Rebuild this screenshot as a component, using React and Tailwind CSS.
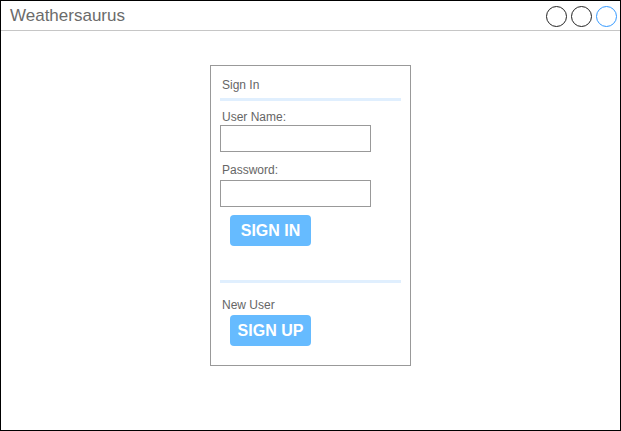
import React from 'react';

const App = () => {
  return (
    <div
      className="w-[621px] h-[431px] border border-black bg-white box-border flex flex-col font-['Liberation_Sans',Arial,sans-serif]"
    >
      {/* Window title bar */}
      <div className="h-[30px] shrink-0 border-b border-[#c6c6c6] box-border flex items-start justify-between pl-[9px] pr-[3px]">
        <div className="mt-[5px] text-[17px] leading-[19px] text-[#6b6b6b]">Weathersaurus</div>
        <div className="flex gap-[4px] mt-[5px]">
          <div className="w-[21px] h-[21px] rounded-full border border-[#222]" />
          <div className="w-[21px] h-[21px] rounded-full border border-[#222]" />
          <div className="w-[21px] h-[21px] rounded-full border border-[#3399ff]" />
        </div>
      </div>

      {/* Sign in card */}
      <div className="ml-[209px] mt-[34px] w-[201px] h-[301px] border border-[#999] box-border flex flex-col items-start">
        <div className="mt-[12px] ml-[11px] text-[12px] leading-[14px] text-[#666]">Sign In</div>
        <div className="mt-[6px] ml-[9px] w-[181px] h-[3px] bg-[#e0effe]" />

        <div className="mt-[9px] ml-[11px] text-[12px] leading-[14px] text-[#666]">User Name:</div>
        <input
          type="text"
          className="mt-[1px] ml-[9px] w-[151px] h-[27px] border border-[#999] box-border outline-none"
        />

        <div className="mt-[11px] ml-[11px] text-[12px] leading-[14px] text-[#666]">Password:</div>
        <input
          type="password"
          className="mt-[3px] ml-[9px] w-[151px] h-[27px] border border-[#999] box-border outline-none"
        />

        <button className="mt-[8px] ml-[19px] w-[81px] h-[31px] rounded-[4px] bg-[#66bbff] text-white font-bold text-[16px] leading-[18px] flex items-center justify-center">
          SIGN IN
        </button>

        <div className="mt-[34px] ml-[9px] w-[181px] h-[3px] bg-[#e0effe]" />

        <div className="mt-[15px] ml-[11px] text-[12px] leading-[14px] text-[#666]">New User</div>
        <button className="mt-[3px] ml-[19px] w-[81px] h-[31px] rounded-[4px] bg-[#66bbff] text-white font-bold text-[16px] leading-[18px] flex items-center justify-center">
          SIGN UP
        </button>
      </div>
    </div>
  );
};

export default App;
